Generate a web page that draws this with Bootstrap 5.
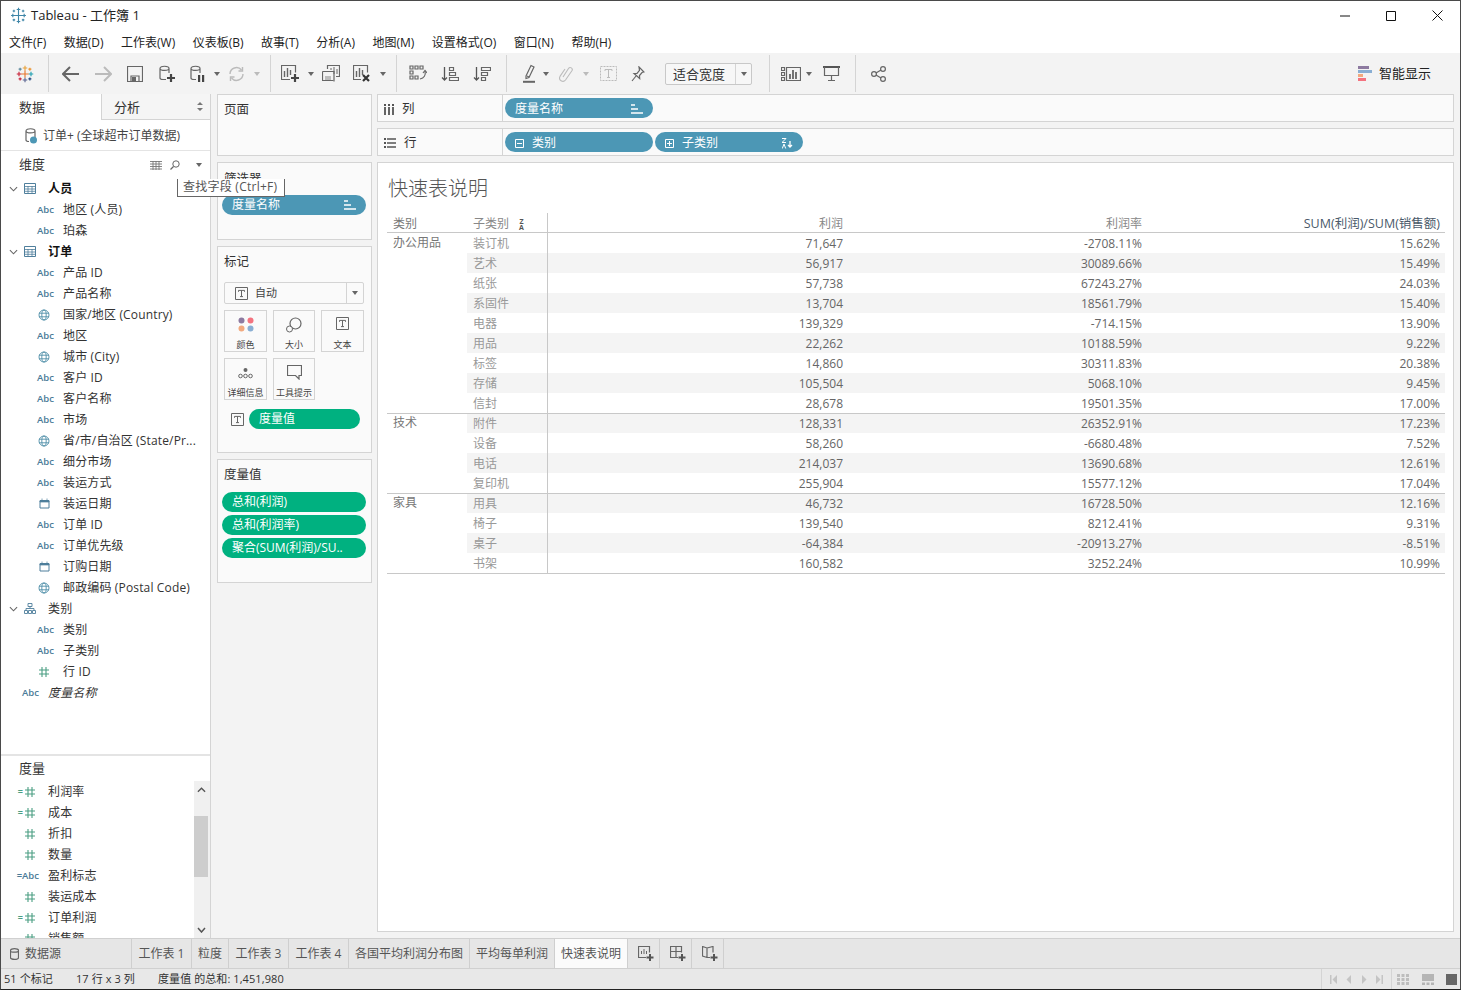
<!DOCTYPE html>
<html lang="zh-CN">
<head>
  <meta charset="UTF-8">
  <meta name="viewport" content="width=device-width, initial-scale=1.0">
  <title>Tableau - 工作簿 1</title>
  <link rel="stylesheet" href="https://cdn.jsdelivr.net/npm/bootstrap@5.3.0/dist/css/bootstrap.min.css">
  <style>
    html, body { height: 100%; overflow: hidden; }
    body {
      font-family: "Open Sans", "Noto Sans CJK SC", sans-serif;
      font-size: 12px;
      color: #333;
      background: #f3f3f3;
    }
    svg { display: block; flex: none; }
    .app { width: 1461px; height: 990px; border: 1px solid #4a4a4a; border-bottom-color: #222; }
    .ln { fill: none; stroke: #666; stroke-width: 1.2; }

    .titlebar { height: 29px; background: #fff; font-size: 13px; color: #222; padding-left: 9px; }
    .win-btns { margin-left: auto; }
    .win-btn { width: 46px; height: 29px; }
    .menubar { height: 23px; background: #fff; padding: 3px 0 0 8px; gap: 17.5px; color: #222; }

    .toolbar { height: 41px; background: #f3f3f3; }
    .tb-g { height: 37px; border-right: 1px solid #d4d4d4; }
    .tb-g1 { width: 48px; padding-left: 15px; }
    .tb-g2 { width: 222px; padding-left: 6px; }
    .tb-g3 { width: 126px; padding-left: 4px; }
    .tb-g4 { width: 110px; padding-left: 5px; }
    .tb-g5 { width: 263px; padding-left: 8px; }
    .tb-g6 { width: 86px; padding-left: 6px; }
    .tb-g7 { padding-left: 6px; }
    .bx6 { width: 6px; } .bx8 { width: 8px; } .bx12 { width: 12px; } .bx16 { width: 16px; }
    .bx22 { width: 22px; } .bx26 { width: 26px; } .bx28 { width: 28px; } .bx30 { width: 30px; }
    .bx32 { width: 32px; } .bx34 { width: 34px; } .bx38 { width: 38px; }
    .caret { width: 0; height: 0; border: 3px solid transparent; border-top: 4px solid #666; border-bottom: 0; }
    .caret-off { border-top-color: #bbb; }
    .fit-box {
      width: 87px; height: 22px; margin-left: 16px; background: #f7f7f7;
      border: 1px solid #c8c8c8; border-radius: 2px; font-size: 13px; color: #333;
    }
    .fit-txt { width: 70px; padding-left: 7px; border-right: 1px solid #d4d4d4; line-height: 20px; }
    .smart { margin-left: auto; padding-right: 29px; gap: 7px; font-size: 13px; color: #222; }

    .workspace { height: 844px; }
    .datapane { width: 210px; background: #fff; border-right: 1px solid #d4d4d4; }
    .dp-tabs { height: 26px; font-size: 13px; }
    .dp-tab-on { width: 100px; padding-left: 18px; line-height: 27px; }
    .dp-tab-off {
      flex: 1; padding: 0 7px 0 12px; background: #f5f5f5; line-height: 27px;
      border-left: 1px solid #d4d4d4; border-bottom: 1px solid #d4d4d4;
    }
    .dp-src { height: 31px; padding: 1px 0 0 24px; gap: 6px; border-bottom: 1px solid #e4e4e4; color: #444; }
    .dp-head { height: 27px; padding: 1px 8px 0 18px; font-size: 13px; }
    .dp-head-ms { height: 25px; }
    .dim-wrap { height: 578px; border-bottom: 2px solid #e4e4e4; }
    .fld { height: 21px; line-height: 21px; white-space: nowrap; color: #333; letter-spacing: .15px; }
    .chev { width: 23px; padding-left: 8px; }
    .grp-ic { width: 24px; }
    .grp-name { font-weight: 700; color: #111; }
    .type-ic { width: 62px; padding-right: 9px; justify-content: flex-end; }
    .type-wide { width: 47px; padding-right: 9px; justify-content: flex-end; }
    .abc { font-size: 9.5px; font-weight: 600; color: #4a7b98; line-height: 21px; letter-spacing: 0; }
    .ms-wrap { height: 157px; }
    .ms-list { width: 193px; overflow: hidden; }
    .sb { width: 16px; background: #f0f0f0; padding: 0 2px 0 0; }
    .sb-btn { height: 17px; }
    .sb-gap1 { height: 18px; }
    .sb-thumb { height: 61px; background: #cdcdcd; }
    .sb-gap2 { flex: 1; }
    .eq-g { color: #4a9e82; }
    .eq-b { color: #4a7b98; font-size: 9.5px; font-weight: 600; letter-spacing: 0; }
    .ms-ic { width: 47px; padding-right: 12px; justify-content: flex-end; gap: 1px; line-height: 21px; font-size: 9px; font-weight: 700; letter-spacing: 0; }
    .ms-ic.eq-b { padding-right: 9px; font-size: 9.5px; font-weight: 600; }

    .shelf-col { width: 155px; margin-left: 6px; gap: 6px; }
    .pane-box { background: #fafafa; border: 1px solid #d4d4d4; }
    .box-pages { height: 62px; padding: 6px; }
    .box-filters { height: 78px; padding: 7px 4px 0; }
    .box-marks { height: 207px; padding: 6px 7px 6px 6px; }
    .box-vals { height: 124px; padding: 6px 4px; }
    .box-ttl { font-size: 12.5px; line-height: 18px; color: #333; }
    .box-filters .box-ttl { padding-left: 2px; margin-bottom: 7px; }
    .box-vals .box-ttl { padding-left: 2px; margin-bottom: 8px; }
    .tip {
      position: absolute; left: 176px; top: 178px; z-index: 5; height: 18px; width: 108px;
      background: #fff; border: 1px solid #666; border-top: 0; line-height: 16px;
      padding-left: 5px; color: #555; white-space: nowrap; letter-spacing: .25px;
    }

    .pilly {
      height: 20px; line-height: 20px; color: #fff; white-space: nowrap;
      padding: 0 10px; border-radius: 10px; justify-content: space-between; overflow: hidden;
    }
    .pill-b { background: #4c97b5; }
    .pill-g { background: #00b180; }
    .pill-w { width: 148px; }
    .pill-ws { width: 144px; }
    .pill-vals { gap: 3px; }

    .mk-sel {
      height: 22px; margin-top: 11px; background: #fafafa; border: 1px solid #d4d4d4; border-radius: 2px;
      font-size: 11px; color: #444;
    }
    .mk-main { flex: 1; padding-left: 10px; gap: 7px; border-right: 1px solid #d4d4d4; }
    .mk-arrow { width: 16px; }
    .mk-grid { margin-top: 6px; gap: 6px; }
    .mk-btn {
      width: 43px; height: 42px; border: 1px solid #d4d4d4; background: #fafafa;
      font-size: 9px; color: #444; padding-top: 6px; white-space: nowrap;
    }
    .mk-btn:nth-child(2) { width: 42px; }
    .mk-svg { height: 21px; }
    .mk-val { margin-top: 9px; padding-left: 7px; gap: 5px; }
    .mk-val .pilly { width: 111px; }

    .right-col { width: 1077px; margin-left: 5px; }
    .shelf-row { height: 28px; background: #fafafa; border: 1px solid #d4d4d4; margin-bottom: 6px; }
    .shelf-lbl { width: 125px; padding: 2px 0 0 6px; gap: 8px; font-size: 12.5px; border-right: 1px solid #d4d4d4; }
    .shelf-body { padding-left: 2px; gap: 2px; }
    .shelf-body .pilly { padding-top: 2px; }
    .viz { height: 770px; background: #fff; border: 1px solid #d4d4d4; padding: 10px 0 0 9px; }
    .viz-ttl { font-size: 20px; line-height: 30px; color: #555; font-weight: 300; padding: 1px 0 0 1px; margin-bottom: 9px; }
    .qt { table-layout: fixed; width: 1058px; border-collapse: separate; border-spacing: 0; color: #666; }
    .qt th, .qt td { height: 20px; line-height: 19px; padding: 0 5px; font-weight: 400; white-space: nowrap; overflow: hidden; }
    .qt thead th { color: #888; border-bottom: 1px solid #c8c8c8; vertical-align: middle; padding-top: 2px; line-height: 17px; }
    .qt .sum-h { color: #4a5a6a; font-size: 12.5px; }
    .c1 { width: 80px; } .c2 { width: 81px; } .c3 { width: 300px; } .c4 { width: 299px; } .c5 { width: 298px; }
    .qt .cat { vertical-align: top; color: #777; padding-left: 6px; }
    .qt .sub { color: #999; padding-left: 6px; border-right: 1px solid #c8c8c8; }
    .qt thead .sub { color: #888; }
    .qt .num { text-align: right; }
    .qt tr.bnd td:not(.cat) { background: #f4f4f4; }
    .qt tr.gtop td { border-top: 1px solid #c8c8c8; line-height: 18px; }
    .qt .cat-end { border-bottom: 1px solid #c8c8c8; }
    .qt tbody tr.endrow td { height: 21px; border-bottom: 1px solid #c8c8c8; }
    .za { display: inline-block; margin-left: 10px; font-size: 7px; line-height: 6px; font-weight: 700; color: #555; vertical-align: middle; text-align: center; }

    .tabbar { height: 31px; background: #e6e6e6; border-top: 1px solid #d0d0d0; border-bottom: 1px solid #d0d0d0; color: #555; font-size: 12px; }
    .sh-tab { height: 29px; border-right: 1px solid #cfcfcf; justify-content: center; white-space: nowrap; }
    .t-src { width: 131px; padding-left: 9px; gap: 6px; justify-content: flex-start; }
    .t-60 { width: 60px; } .t-37 { width: 37px; } .t-121 { width: 121px; } .t-85 { width: 85px; }
    .t-73 { width: 73px; background: #fbfbfb; color: #555; }
    .t-32 { width: 32px; padding-left: 5px; }
    .statusbar { height: 20px; background: #e8e8e8; padding-left: 3px; color: #333; font-size: 11px; letter-spacing: .08px; }
    .st-1 { width: 72px; } .st-2 { width: 82px; }
    .st-right { margin-left: auto; height: 20px; }
    .st-nav { width: 71px; border-left: 1px solid #d4d4d4; border-right: 1px solid #d4d4d4; padding: 0 4px 0 3px; justify-content: space-around; }
    .st-view { width: 68px; padding: 0 3px 0 5px; justify-content: space-between; }
  </style>
</head>
<body>
  <svg width="0" height="0" class="position-absolute">
    <symbol id="i-tbl" viewBox="0 0 12 11"><path d="M.5.5h11v10H.5z" fill="none" stroke="#4f7f9c"/><path d="M.5 3.5h11M.5 6h11M.5 8.3h11M4 3v7M8 3v7" stroke="#4f7f9c" stroke-width=".8" fill="none"/></symbol>
    <symbol id="i-chev" viewBox="0 0 10 6"><path d="M1 1l4 4 4-4" fill="none" stroke="#666" stroke-width="1.2"/></symbol>
    <symbol id="i-globe" viewBox="0 0 12 12"><g fill="none" stroke="#4f8fa8" stroke-width=".9"><circle cx="6" cy="6" r="5"/><ellipse cx="6" cy="6" rx="2.2" ry="5"/><path d="M1 4.2h10M1 7.8h10"/></g></symbol>
    <symbol id="i-cal" viewBox="0 0 11 11"><path d="M1 2.5h9v7.5H1z" fill="none" stroke="#4f7f9c"/><path d="M1 3h9v1H1zM3 .5v2M8 .5v2" fill="#4f7f9c" stroke="#4f7f9c" stroke-width=".7"/></symbol>
    <symbol id="i-hash" viewBox="0 0 12 12"><path d="M4 1v10M8 1v10M1 4h10M1 8h10" fill="none" stroke="currentColor" stroke-width="1.1"/></symbol>
    <symbol id="i-t" viewBox="0 0 13 13"><path d="M.5.5h12v12H.5z" fill="none" stroke="#666"/><path d="M3.5 4.8V3.4h6v1.4M6.5 3.4v6.2M5 9.6h3" fill="none" stroke="#666"/></symbol>
    <symbol id="i-bars" viewBox="0 0 12 10"><path d="M0 1h4M0 5h7M0 9h12" stroke="#fff" stroke-width="1.7"/></symbol>
    <symbol id="i-logo" viewBox="0 0 24 24">
      <g fill="none" stroke-width="1.5">
        <path d="M12 7v10M7 12h10" stroke="#e8762b"/>
        <path d="M12 1v6M9 4h6" stroke="#e8a13a"/>
        <path d="M12 17v6M9 20h6" stroke="#5b6591"/>
        <path d="M4 9v6M1 12h6" stroke="#c72037"/>
        <path d="M20 9v6M17 12h6" stroke="#1f9fb0"/>
        <path d="M5.5 3.5v4M3.5 5.5h4" stroke="#5b879b"/>
        <path d="M18.5 3.5v4M16.5 5.5h4" stroke="#eb912b"/>
        <path d="M5.5 16.5v4M3.5 18.5h4" stroke="#c72037"/>
        <path d="M18.5 16.5v4M16.5 18.5h4" stroke="#1f447e"/>
      </g>
    </symbol>
    <symbol id="i-logo-b" viewBox="0 0 24 24">
      <g fill="none" stroke="#3f86a8" stroke-width="1.6">
        <path d="M12 6v12M6 12h12M12 1v5M9.5 3.5h5M12 18v5M9.5 20.5h5M4 9.5v5M1.5 12h5M20 9.5v5M17.5 12h5M5.5 4v3.5M3.7 5.7h3.6M18.5 4v3.5M16.7 5.7h3.6M5.5 16.5V20M3.7 18.2h3.6M18.5 16.5V20M16.7 18.2h3.6"/>
      </g>
    </symbol>
  </svg>

  <div class="app d-flex flex-column position-relative">
    <!-- title bar -->
    <div class="titlebar d-flex align-items-center gap-1">
      <svg width="17" height="17"><use href="#i-logo-b"/></svg>
      <span>Tableau - 工作簿 1</span>
      <div class="win-btns d-flex">
        <div class="win-btn d-flex align-items-center justify-content-center"><svg width="10" height="10"><path d="M0 5h10" stroke="#111"/></svg></div>
        <div class="win-btn d-flex align-items-center justify-content-center"><svg width="10" height="10"><path d="M.5.5h9v9h-9z" fill="none" stroke="#111"/></svg></div>
        <div class="win-btn d-flex align-items-center justify-content-center"><svg width="11" height="11"><path d="M.5.5l10 10M10.5.5l-10 10" stroke="#111"/></svg></div>
      </div>
    </div>
    <!-- menu -->
    <div class="menubar d-flex align-items-center">
      <span>文件(F)</span><span>数据(D)</span><span>工作表(W)</span><span>仪表板(B)</span><span>故事(T)</span><span>分析(A)</span><span>地图(M)</span><span>设置格式(O)</span><span>窗口(N)</span><span>帮助(H)</span>
    </div>
    <!-- toolbar -->
    <div class="toolbar d-flex align-items-center">
      <div class="tb-g tb-g1 d-flex align-items-center"><svg width="18" height="18"><use href="#i-logo"/></svg></div>

      <div class="tb-g tb-g2 d-flex align-items-center">
        <div class="bx32 d-flex justify-content-center"><svg width="18" height="16" viewBox="0 0 18 16"><path d="M1 8h16M8 1L1 8l7 7" fill="none" stroke="#666" stroke-width="2"/></svg></div>
        <div class="bx32 d-flex justify-content-center"><svg width="18" height="16" viewBox="0 0 18 16"><path d="M17 8H1M10 1l7 7-7 7" fill="none" stroke="#bbb" stroke-width="2"/></svg></div>
        <div class="bx32 d-flex justify-content-center"><svg width="16" height="16" viewBox="0 0 16 16"><path d="M.5.5h15v15H.5z" class="ln"/><path d="M4 15v-5h8v5" class="ln"/><path d="M5 11h4v4H5z" fill="#666"/></svg></div>
        <div class="bx32 d-flex justify-content-center"><svg width="18" height="18" viewBox="0 0 18 18"><path d="M2 3.5c0-3 9-3 9 0V8M2 3.5c0 2.5 9 2.5 9 0M2 3.5V13c0 1 1 1.5 3 1.5h3" class="ln"/><path d="M13 9v8M9 13h8" stroke="#444" stroke-width="2.2"/></svg></div>
        <div class="bx28 d-flex justify-content-center"><svg width="16" height="18" viewBox="0 0 16 18"><path d="M2 3.5c0-3 9-3 9 0V8M2 3.5c0 2.5 9 2.5 9 0M2 3.5V13c0 1 1 1.5 3 1.5h2" class="ln"/><path d="M9 10h2.2v7H9zM13 10h2.2v7H13z" fill="#444"/></svg></div>
        <div class="bx12 d-flex justify-content-center"><div class="caret"></div></div>
        <div class="bx26 d-flex justify-content-center"><svg width="17" height="16" viewBox="0 0 17 16"><path d="M2 8a6.5 6.5 0 0 1 11.5-4M15 8a6.5 6.5 0 0 1-11.5 4" fill="none" stroke="#bbb" stroke-width="1.4"/><path d="M14.5 1v4h-4M2.5 15v-4h4" fill="none" stroke="#bbb" stroke-width="1.4"/></svg></div>
        <div class="bx16 d-flex justify-content-center"><div class="caret caret-off"></div></div>
      </div>

      <div class="tb-g tb-g3 d-flex align-items-center">
        <div class="bx32 d-flex justify-content-center"><svg width="20" height="18" viewBox="0 0 20 18"><path d="M9 14.5H.5V.5h14v7" class="ln"/><path d="M3.5 6v6M6.5 3v9M9.5 5v5" stroke="#666" stroke-width="1.4"/><path d="M14 9v8M10 13h8" stroke="#444" stroke-width="2.2"/></svg></div>
        <div class="bx8 d-flex justify-content-center"><div class="caret"></div></div>
        <div class="bx32 d-flex justify-content-center"><svg width="18" height="17" viewBox="0 0 18 17"><path d="M5.5 4V.5h12v11H14" class="ln"/><path d="M.5 6.5H12v10" class="ln"/><path d="M.5 6.5v9h11" class="ln"/><path d="M9 3v2M12 2v7M15 4v5" stroke="#666"/><path d="M3 12h6M3 14h6" stroke="#888"/></svg></div>
        <div class="bx32 d-flex justify-content-center"><svg width="20" height="18" viewBox="0 0 20 18"><path d="M8 14.5H.5V.5h14v7" class="ln"/><path d="M3.5 6v6M6.5 3v9M9.5 5v5" stroke="#666" stroke-width="1.4"/><path d="M10 10l6 6M16 10l-6 6" stroke="#333" stroke-width="2.2"/></svg></div>
        <div class="bx8 d-flex justify-content-center"><div class="caret"></div></div>
      </div>

      <div class="tb-g tb-g4 d-flex align-items-center">
        <div class="bx32 d-flex justify-content-center"><svg width="18" height="17" viewBox="0 0 18 17"><path d="M1 1h3v3H1zM6 1h3v3H6zM11 1h3v3h-3zM1 6h3v3H1zM1 11h3v3H1zM6 11h3v3H6z" class="ln"/><path d="M16 6c1 4-1 7-5 8" class="ln"/><path d="M14 8l2-2.5L18 8" class="ln"/></svg></div>
        <div class="bx32 d-flex justify-content-center"><svg width="18" height="16" viewBox="0 0 18 16"><path d="M3.5 1v13M1 11.5L3.5 14 6 11.5" fill="none" stroke="#555" stroke-width="1.3"/><path d="M8.5 1.5h4v3h-4zM8.5 6.5h6v3h-6zM8.5 11.5h9v3h-9z" class="ln"/></svg></div>
        <div class="bx32 d-flex justify-content-center"><svg width="18" height="16" viewBox="0 0 18 16"><path d="M3.5 1v13M1 11.5L3.5 14 6 11.5" fill="none" stroke="#555" stroke-width="1.3"/><path d="M8.5 1.5h9v3h-9zM8.5 6.5h6v3h-6zM8.5 11.5h4v3h-4z" class="ln"/></svg></div>
      </div>

      <div class="tb-g tb-g5 d-flex align-items-center">
        <div class="bx28 d-flex justify-content-center"><svg width="14" height="19" viewBox="0 0 14 19"><path d="M4 12L9 1.5l3 1.5-5 10.5-3 1z" class="ln"/><path d="M5 12l2 1" class="ln"/><path d="M1 17.8h12" stroke="#666" stroke-width="2"/></svg></div>
        <div class="bx6 d-flex justify-content-center"><div class="caret"></div></div>
        <div class="bx34 d-flex justify-content-center"><svg width="14" height="18" viewBox="0 0 14 18"><path d="M4 12L9.5 3.5a2 2 0 0 1 3.4 2.2L6.5 15a3.3 3.3 0 0 1-5.5-3.6L6 4" fill="none" stroke="#bbb" stroke-width="1.1"/></svg></div>
        <div class="bx6 d-flex justify-content-center"><div class="caret caret-off"></div></div>
        <div class="bx38 d-flex justify-content-center"><svg width="17" height="15" viewBox="0 0 17 15"><path d="M.5.5h16v14H.5z" fill="none" stroke="#bbb" stroke-dasharray="2 1"/><path d="M5 5V3.500h7V5M8.500 3.500v8M7 11.500h3" fill="none" stroke="#bbb"/></svg></div>
        <div class="bx22 d-flex justify-content-center"><svg width="14" height="16" viewBox="0 0 14 16"><path d="M8 1l5 5-2 .5-2.500 3 .2 3L3 7.500l3-.2 2.500-3z" class="ln"/><path d="M5 10l-4 5" class="ln"/></svg></div>
        <div class="fit-box d-flex">
          <div class="fit-txt">适合宽度</div>
          <div class="flex-grow-1 d-flex align-items-center justify-content-center"><div class="caret"></div></div>
        </div>
      </div>

      <div class="tb-g tb-g6 d-flex align-items-center">
        <div class="bx30 d-flex justify-content-center"><svg width="20" height="14" viewBox="0 0 20 14"><path d="M.5.5h3v3h-3zM.5 5.500h3v3h-3zM.5 10.500h3v3h-3zM5.500.5h14v13h-14z" class="ln"/><path d="M9 12V7M12 12V3M15 12V5" stroke="#666" stroke-width="1.8"/></svg></div>
        <div class="bx6 d-flex justify-content-center"><div class="caret"></div></div>
        <div class="bx38 d-flex justify-content-center"><svg width="17" height="15" viewBox="0 0 17 15"><path d="M0 1h17" stroke="#555" stroke-width="2"/><path d="M1.500 1v8.500h14V1M8.500 9.500v5M5 14.500h7" class="ln"/></svg></div>
      </div>

      <div class="tb-g7 d-flex align-items-center">
        <div class="bx32 d-flex justify-content-center"><svg width="15" height="16" viewBox="0 0 15 16"><circle cx="3" cy="8" r="2.4" class="ln"/><circle cx="12" cy="3" r="2.4" class="ln"/><circle cx="12" cy="13" r="2.4" class="ln"/><path d="M5 7l5-3M5 9l5 3" class="ln"/></svg></div>
      </div>

      <div class="smart d-flex align-items-center">
        <svg width="14" height="16" viewBox="0 0 14 16"><path d="M0 0h11v3H0z" fill="#8d7aa0"/><path d="M0 4h14v3H0z" fill="#89aed3"/><path d="M0 8h5v3H0z" fill="#f2a97e"/><path d="M0 12h8v3H0z" fill="#f4737f"/></svg>
        <span>智能显示</span>
      </div>
    </div>

    <!-- main area -->
    <div class="workspace d-flex">
      <!-- data pane -->
      <div class="datapane d-flex flex-column">
        <div class="dp-tabs d-flex">
          <div class="dp-tab-on">数据</div>
          <div class="dp-tab-off d-flex justify-content-between">
            <span>分析</span>
            <svg width="6" height="25" viewBox="0 0 6 25"><path d="M0 11l3-3 3 3zM0 14l3 3 3-3z" fill="#777"/></svg>
          </div>
        </div>
        <div class="dp-src d-flex align-items-center">
          <svg width="12" height="16" viewBox="0 0 12 16"><path d="M1 3c0-3 9-3 9 0v7M1 3c0 2.5 9 2.5 9 0M1 3v9c0 1 1 1.5 3 1.5" class="ln"/><circle cx="8.5" cy="12" r="3.5" fill="#4c97b5"/></svg>
          <span>订单+ (全球超市订单数据)</span>
        </div>
        <div class="dp-head d-flex align-items-center justify-content-between">
          <span>维度</span>
          <div class="d-flex align-items-center">
            <svg width="12" height="9" viewBox="0 0 12 9"><path d="M0 .5h12M0 3h12M0 5.5h12M0 8h12M3 0v9M6 0v9M9 0v9" stroke="#777" stroke-width=".9"/></svg>
            <svg class="ms-2" width="10" height="10" viewBox="0 0 10 10"><circle cx="6" cy="4" r="3.2" fill="none" stroke="#666"/><path d="M3.5 6.5L.5 9.5" stroke="#666" stroke-width="1.3"/></svg>
            <div class="ms-3"><div class="caret"></div></div>
          </div>
        </div>
        <div class="dim-wrap">
          <div class="fld d-flex align-items-center"><div class="chev"><svg width="9" height="6"><use href="#i-chev"/></svg></div><div class="grp-ic"><svg width="12" height="11"><use href="#i-tbl"/></svg></div><span class="grp-name">人员</span></div>
          <div class="fld d-flex"><div class="type-ic d-flex"><span class="abc">Abc</span></div><span>地区 (人员)</span></div>
          <div class="fld d-flex"><div class="type-ic d-flex"><span class="abc">Abc</span></div><span>珀森</span></div>
          <div class="fld d-flex align-items-center"><div class="chev"><svg width="9" height="6"><use href="#i-chev"/></svg></div><div class="grp-ic"><svg width="12" height="11"><use href="#i-tbl"/></svg></div><span class="grp-name">订单</span></div>
          <div class="fld d-flex"><div class="type-ic d-flex"><span class="abc">Abc</span></div><span>产品 ID</span></div>
          <div class="fld d-flex"><div class="type-ic d-flex"><span class="abc">Abc</span></div><span>产品名称</span></div>
          <div class="fld d-flex"><div class="type-ic d-flex align-items-center"><svg class="me-1" width="12" height="12"><use href="#i-globe"/></svg></div><span>国家/地区 (Country)</span></div>
          <div class="fld d-flex"><div class="type-ic d-flex"><span class="abc">Abc</span></div><span>地区</span></div>
          <div class="fld d-flex"><div class="type-ic d-flex align-items-center"><svg class="me-1" width="12" height="12"><use href="#i-globe"/></svg></div><span>城市 (City)</span></div>
          <div class="fld d-flex"><div class="type-ic d-flex"><span class="abc">Abc</span></div><span>客户 ID</span></div>
          <div class="fld d-flex"><div class="type-ic d-flex"><span class="abc">Abc</span></div><span>客户名称</span></div>
          <div class="fld d-flex"><div class="type-ic d-flex"><span class="abc">Abc</span></div><span>市场</span></div>
          <div class="fld d-flex"><div class="type-ic d-flex align-items-center"><svg class="me-1" width="12" height="12"><use href="#i-globe"/></svg></div><span>省/市/自治区 (State/Pr...</span></div>
          <div class="fld d-flex"><div class="type-ic d-flex"><span class="abc">Abc</span></div><span>细分市场</span></div>
          <div class="fld d-flex"><div class="type-ic d-flex"><span class="abc">Abc</span></div><span>装运方式</span></div>
          <div class="fld d-flex"><div class="type-ic d-flex align-items-center"><svg class="me-1" width="11" height="11"><use href="#i-cal"/></svg></div><span>装运日期</span></div>
          <div class="fld d-flex"><div class="type-ic d-flex"><span class="abc">Abc</span></div><span>订单 ID</span></div>
          <div class="fld d-flex"><div class="type-ic d-flex"><span class="abc">Abc</span></div><span>订单优先级</span></div>
          <div class="fld d-flex"><div class="type-ic d-flex align-items-center"><svg class="me-1" width="11" height="11"><use href="#i-cal"/></svg></div><span>订购日期</span></div>
          <div class="fld d-flex"><div class="type-ic d-flex align-items-center"><svg class="me-1" width="12" height="12"><use href="#i-globe"/></svg></div><span>邮政编码 (Postal Code)</span></div>
          <div class="fld d-flex align-items-center"><div class="chev"><svg width="9" height="6"><use href="#i-chev"/></svg></div><div class="grp-ic"><svg width="12" height="11" viewBox="0 0 12 11"><path d="M4 .5h4v3H4zM.5 7.5h3v3h-3zM4.5 7.5h3v3h-3zM8.5 7.5h3v3h-3zM6 3.5v2M2 7.5v-2h8v2" fill="none" stroke="#4f7f9c" stroke-width=".9"/></svg></div><span>类别</span></div>
          <div class="fld d-flex"><div class="type-ic d-flex"><span class="abc">Abc</span></div><span>类别</span></div>
          <div class="fld d-flex"><div class="type-ic d-flex"><span class="abc">Abc</span></div><span>子类别</span></div>
          <div class="fld d-flex"><div class="type-ic d-flex align-items-center"><svg class="me-1 eq-g" width="12" height="12"><use href="#i-hash"/></svg></div><span>行 ID</span></div>
          <div class="fld d-flex"><div class="type-wide d-flex"><span class="abc">Abc</span></div><span class="fst-italic">度量名称</span></div>
        </div>
        <div class="dp-head dp-head-ms d-flex align-items-center"><span>度量</span></div>
        <div class="ms-wrap d-flex">
          <div class="ms-list">
            <div class="fld d-flex"><div class="ms-ic d-flex align-items-center eq-g">=<svg width="12" height="12"><use href="#i-hash"/></svg></div><span>利润率</span></div>
            <div class="fld d-flex"><div class="ms-ic d-flex align-items-center eq-g">=<svg width="12" height="12"><use href="#i-hash"/></svg></div><span>成本</span></div>
            <div class="fld d-flex"><div class="ms-ic d-flex align-items-center eq-g"><svg width="12" height="12"><use href="#i-hash"/></svg></div><span>折扣</span></div>
            <div class="fld d-flex"><div class="ms-ic d-flex align-items-center eq-g"><svg width="12" height="12"><use href="#i-hash"/></svg></div><span>数量</span></div>
            <div class="fld d-flex"><div class="ms-ic d-flex eq-b">=Abc</div><span>盈利标志</span></div>
            <div class="fld d-flex"><div class="ms-ic d-flex align-items-center eq-g"><svg width="12" height="12"><use href="#i-hash"/></svg></div><span>装运成本</span></div>
            <div class="fld d-flex"><div class="ms-ic d-flex align-items-center eq-g">=<svg width="12" height="12"><use href="#i-hash"/></svg></div><span>订单利润</span></div>
            <div class="fld d-flex"><div class="ms-ic d-flex align-items-center eq-g"><svg width="12" height="12"><use href="#i-hash"/></svg></div><span>销售额</span></div>
          </div>
          <div class="sb d-flex flex-column">
            <div class="sb-btn d-flex align-items-center justify-content-center"><svg width="9" height="6" viewBox="0 0 10 6"><path d="M1 5l4-4 4 4" fill="none" stroke="#555" stroke-width="1.5"/></svg></div>
            <div class="sb-gap1"></div>
            <div class="sb-thumb"></div>
            <div class="sb-gap2"></div>
            <div class="sb-btn d-flex align-items-center justify-content-center"><svg width="9" height="6"><path d="M1 1l3.5 4L8 1" fill="none" stroke="#555" stroke-width="1.5"/></svg></div>
          </div>
        </div>
      </div>

      <!-- pages, filters, marks -->
      <div class="shelf-col d-flex flex-column">
        <div class="pane-box box-pages"><div class="box-ttl">页面</div></div>
        <div class="pane-box box-filters">
          <div class="box-ttl">筛选器</div>
          <div class="pilly pill-b pill-ws d-flex align-items-center"><span>度量名称</span><svg width="12" height="10"><use href="#i-bars"/></svg></div>
        </div>
        <div class="pane-box box-marks">
          <div class="box-ttl">标记</div>
          <div class="mk-sel d-flex">
            <div class="mk-main d-flex align-items-center"><svg width="13" height="13"><use href="#i-t"/></svg><span>自动</span></div>
            <div class="mk-arrow d-flex align-items-center justify-content-center"><div class="caret"></div></div>
          </div>
          <div class="mk-grid d-flex">
            <div class="mk-btn d-flex flex-column align-items-center">
              <div class="mk-svg"><svg width="16" height="15" viewBox="0 0 16 15"><circle cx="3.5" cy="3.5" r="3" fill="#8d7aa0"/><circle cx="12.5" cy="3.5" r="3" fill="#f4737f"/><circle cx="3.5" cy="11.5" r="3" fill="#f2a97e"/><circle cx="12.5" cy="11.5" r="3" fill="#89aed3"/></svg></div>
              <span>颜色</span>
            </div>
            <div class="mk-btn d-flex flex-column align-items-center">
              <div class="mk-svg"><svg width="16" height="16" viewBox="0 0 16 16"><circle cx="9.5" cy="6.5" r="5.5" class="ln"/><circle cx="3.5" cy="12" r="3" fill="#fafafa" stroke="#666"/></svg></div>
              <span>大小</span>
            </div>
            <div class="mk-btn d-flex flex-column align-items-center">
              <div class="mk-svg"><svg width="13" height="13"><use href="#i-t"/></svg></div>
              <span>文本</span>
            </div>
          </div>
          <div class="mk-grid d-flex">
            <div class="mk-btn d-flex flex-column align-items-center">
              <div class="mk-svg"><svg width="15" height="14" viewBox="0 0 15 14"><circle cx="7.5" cy="5" r="2" fill="#666"/><circle cx="2.5" cy="11" r="1.8" fill="none" stroke="#666"/><circle cx="7.5" cy="11" r="1.8" fill="none" stroke="#666"/><circle cx="12.5" cy="11" r="1.8" fill="none" stroke="#666"/></svg></div>
              <span>详细信息</span>
            </div>
            <div class="mk-btn d-flex flex-column align-items-center">
              <div class="mk-svg"><svg width="15" height="15" viewBox="0 0 15 15"><path d="M.5.5h14v10H12v3.500L8.500 10.500H.5z" class="ln"/></svg></div>
              <span>工具提示</span>
            </div>
          </div>
          <div class="mk-val d-flex align-items-center">
            <svg width="13" height="13"><use href="#i-t"/></svg>
            <div class="pilly pill-g d-flex"><span>度量值</span></div>
          </div>
        </div>
        <div class="pane-box box-vals">
          <div class="box-ttl">度量值</div>
          <div class="pill-vals d-flex flex-column">
            <div class="pilly pill-g pill-ws d-flex"><span>总和(利润)</span></div>
            <div class="pilly pill-g pill-ws d-flex"><span>总和(利润率)</span></div>
            <div class="pilly pill-g pill-ws d-flex"><span>聚合(SUM(利润)/SU..</span></div>
          </div>
        </div>
      </div>

      <!-- shelves + view -->
      <div class="right-col d-flex flex-column">
        <div class="shelf-row d-flex">
          <div class="shelf-lbl d-flex align-items-center"><svg width="10" height="11" viewBox="0 0 10 11"><path d="M1 3v8M5 3v8M9 3v8" stroke="#555" stroke-width="1.8"/><path d="M0 0h2v2H0zM4 0h2v2H4zM8 0h2v2H8z" fill="#555"/></svg><span>列</span></div>
          <div class="shelf-body d-flex align-items-center">
            <div class="pilly pill-b pill-w d-flex align-items-center"><span>度量名称</span><svg width="12" height="10"><use href="#i-bars"/></svg></div>
          </div>
        </div>
        <div class="shelf-row d-flex">
          <div class="shelf-lbl d-flex align-items-center"><svg width="12" height="10" viewBox="0 0 12 10"><path d="M3 1h9M3 5h9M3 9h9" stroke="#555" stroke-width="1.5"/><path d="M0 0h2v2H0zM0 4h2v2H0zM0 8h2v2H0z" fill="#555"/></svg><span>行</span></div>
          <div class="shelf-body d-flex align-items-center">
            <div class="pilly pill-b pill-w d-flex align-items-center"><span class="d-flex align-items-center gap-2"><svg width="9" height="9" viewBox="0 0 9 9"><path d="M.5.5h8v8h-8zM2 4.5h5" fill="none" stroke="#fff"/></svg>类别</span></div>
            <div class="pilly pill-b pill-w d-flex align-items-center"><span class="d-flex align-items-center gap-2"><svg width="9" height="9" viewBox="0 0 9 9"><path d="M.5.5h8v8h-8zM2 4.5h5M4.5 2v5" fill="none" stroke="#fff"/></svg>子类别</span><svg width="11" height="11" viewBox="0 0 11 11"><path d="M0 .5h4L0 4.5h4M.3 10.5L2 6l1.700 4.500" fill="none" stroke="#fff"/><path d="M8 3v6M6 7l2 2 2-2" fill="none" stroke="#fff" stroke-width="1.3"/></svg></div>
          </div>
        </div>
        <div class="viz">
          <div class="viz-ttl">快速表说明</div>
          <table class="qt">
            <colgroup><col class="c1"><col class="c2"><col class="c3"><col class="c4"><col class="c5"></colgroup>
            <thead>
              <tr>
                <th class="cat">类别</th>
                <th class="sub">子类别<span class="za">Z<br>A</span></th>
                <th class="num">利润</th>
                <th class="num">利润率</th>
                <th class="num sum-h">SUM(利润)/SUM(销售额)</th>
              </tr>
            </thead>
            <tbody>
              <tr><td class="cat" rowspan="9">办公用品</td><td class="sub">装订机</td><td class="num">71,647</td><td class="num">-2708.11%</td><td class="num">15.62%</td></tr>
              <tr class="bnd"><td class="sub">艺术</td><td class="num">56,917</td><td class="num">30089.66%</td><td class="num">15.49%</td></tr>
              <tr><td class="sub">纸张</td><td class="num">57,738</td><td class="num">67243.27%</td><td class="num">24.03%</td></tr>
              <tr class="bnd"><td class="sub">系固件</td><td class="num">13,704</td><td class="num">18561.79%</td><td class="num">15.40%</td></tr>
              <tr><td class="sub">电器</td><td class="num">139,329</td><td class="num">-714.15%</td><td class="num">13.90%</td></tr>
              <tr class="bnd"><td class="sub">用品</td><td class="num">22,262</td><td class="num">10188.59%</td><td class="num">9.22%</td></tr>
              <tr><td class="sub">标签</td><td class="num">14,860</td><td class="num">30311.83%</td><td class="num">20.38%</td></tr>
              <tr class="bnd"><td class="sub">存储</td><td class="num">105,504</td><td class="num">5068.10%</td><td class="num">9.45%</td></tr>
              <tr><td class="sub">信封</td><td class="num">28,678</td><td class="num">19501.35%</td><td class="num">17.00%</td></tr>
              <tr class="bnd gtop"><td class="cat" rowspan="4">技术</td><td class="sub">附件</td><td class="num">128,331</td><td class="num">26352.91%</td><td class="num">17.23%</td></tr>
              <tr><td class="sub">设备</td><td class="num">58,260</td><td class="num">-6680.48%</td><td class="num">7.52%</td></tr>
              <tr class="bnd"><td class="sub">电话</td><td class="num">214,037</td><td class="num">13690.68%</td><td class="num">12.61%</td></tr>
              <tr><td class="sub">复印机</td><td class="num">255,904</td><td class="num">15577.12%</td><td class="num">17.04%</td></tr>
              <tr class="bnd gtop"><td class="cat cat-end" rowspan="4">家具</td><td class="sub">用具</td><td class="num">46,732</td><td class="num">16728.50%</td><td class="num">12.16%</td></tr>
              <tr><td class="sub">椅子</td><td class="num">139,540</td><td class="num">8212.41%</td><td class="num">9.31%</td></tr>
              <tr class="bnd"><td class="sub">桌子</td><td class="num">-64,384</td><td class="num">-20913.27%</td><td class="num">-8.51%</td></tr>
              <tr class="endrow"><td class="sub">书架</td><td class="num">160,582</td><td class="num">3252.24%</td><td class="num">10.99%</td></tr>
            </tbody>
          </table>
        </div>
      </div>
    </div>

    <!-- sheet tabs -->
    <div class="tabbar d-flex">
      <div class="sh-tab t-src d-flex align-items-center"><svg width="9" height="12" viewBox="0 0 9 12"><path d="M.5 2.5c0-2.500 8-2.500 8 0v7c0 2.500-8 2.500-8 0zM.5 3c0 1.500 8 1.500 8 0" class="ln"/></svg><span>数据源</span></div>
      <div class="sh-tab t-60 d-flex align-items-center">工作表 1</div>
      <div class="sh-tab t-37 d-flex align-items-center">粒度</div>
      <div class="sh-tab t-60 d-flex align-items-center">工作表 3</div>
      <div class="sh-tab t-60 d-flex align-items-center">工作表 4</div>
      <div class="sh-tab t-121 d-flex align-items-center">各国平均利润分布图</div>
      <div class="sh-tab t-85 d-flex align-items-center">平均每单利润</div>
      <div class="sh-tab t-73 d-flex align-items-center">快速表说明</div>
      <div class="sh-tab t-32 d-flex align-items-center"><svg width="17" height="16" viewBox="0 0 17 16"><path d="M8 11.5H.5V.5h11v6" class="ln"/><path d="M3.5 8V5M6 8V3M8.5 8V5" stroke="#666"/><path d="M12 8v7M8.5 11.5h7" stroke="#555" stroke-width="2"/></svg></div>
      <div class="sh-tab t-32 d-flex align-items-center"><svg width="17" height="16" viewBox="0 0 17 16"><path d="M8 11.5H.5V.5h11v6M.5 5.5h11M6 .5v11" class="ln"/><path d="M12 8v7M8.5 11.5h7" stroke="#555" stroke-width="2"/></svg></div>
      <div class="sh-tab t-32 d-flex align-items-center"><svg width="17" height="16" viewBox="0 0 17 16"><path d="M8 11.5H5L.5 10V.5L5 2l6-1.500v6M5 2v9.500" class="ln"/><path d="M12 8v7M8.5 11.5h7" stroke="#555" stroke-width="2"/></svg></div>
    </div>
    <!-- status -->
    <div class="statusbar d-flex align-items-center">
      <span class="st-1">51 个标记</span><span class="st-2">17 行 x 3 列</span><span>度量值 的总和: 1,451,980</span>
      <div class="st-right d-flex">
        <div class="st-nav d-flex align-items-center">
          <svg width="7" height="9" viewBox="0 0 7 9"><path d="M0 0h1.5v9H0zM7 0v9L2.500 4.500z" fill="#c4c4c4"/></svg>
          <svg width="6" height="9" viewBox="0 0 6 9"><path d="M5 0v9L.5 4.500z" fill="#c4c4c4"/></svg>
          <svg width="6" height="9" viewBox="0 0 6 9"><path d="M1 0v9l4.500-4.500z" fill="#c4c4c4"/></svg>
          <svg width="7" height="9" viewBox="0 0 7 9"><path d="M7 0H5.500v9H7zM0 0v9l4.500-4.500z" fill="#c4c4c4"/></svg>
        </div>
        <div class="st-view d-flex align-items-center">
          <svg width="12" height="11" viewBox="0 0 12 11"><path d="M0 0h3v3H0zM4.500 0h3v3h-3zM9 0h3v3H9zM0 4h3v3H0zM4.500 4h3v3h-3zM9 4h3v3H9zM0 8h3v3H0zM4.500 8h3v3h-3zM9 8h3v3H9z" fill="#bdbdbd"/></svg>
          <svg width="12" height="11" viewBox="0 0 12 11"><path d="M0 0h12v7H0zM0 8.500h3V11H0zM4.500 8.500h3V11h-3zM9 8.500h3V11H9z" fill="#b5b5b5"/></svg>
          <svg width="11" height="11"><path d="M0 0h11v11H0z" fill="#666"/></svg>
        </div>
      </div>
    </div>

    <div class="tip">查找字段 (Ctrl+F)</div>
  </div>
  <script src="https://cdn.jsdelivr.net/npm/bootstrap@5.3.0/dist/js/bootstrap.bundle.min.js"></script>
</body>
</html>
